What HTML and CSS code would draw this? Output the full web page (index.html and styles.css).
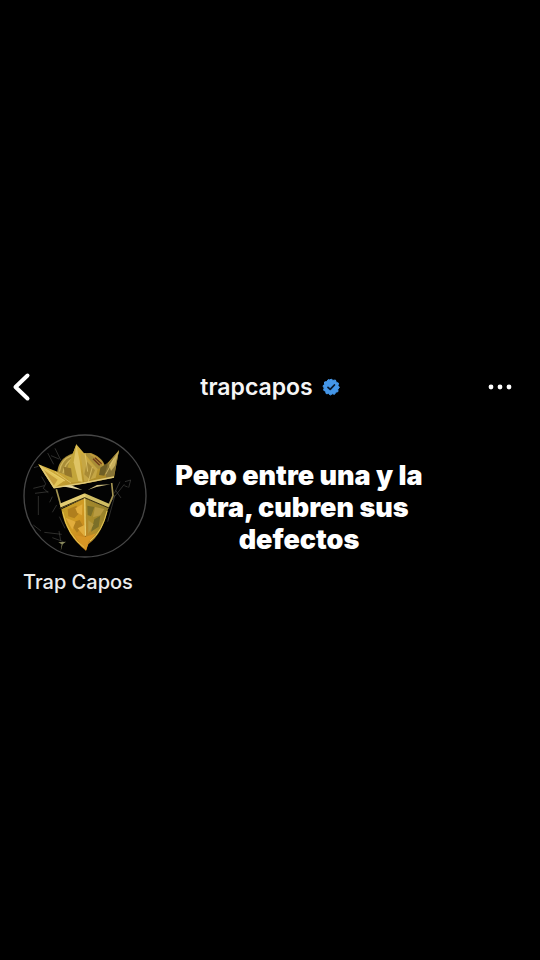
FILE: index.html
```
<!DOCTYPE html>
<html lang="es">
<head>
    <meta charset="UTF-8">
    <meta name="viewport" content="width=device-width, initial-scale=1.0">
    <title>trapcapos</title>
    <link rel="stylesheet" href="styles.css">
</head>
<body>
    <header class="topbar">
        <button class="icon-btn back" type="button" aria-label="Atrás">
            <svg width="20" height="30" viewBox="0 0 20 30" fill="none" stroke="#fff" stroke-width="4" stroke-linecap="round" stroke-linejoin="round">
                <path d="M15.5 3.5 L3.5 15 L15.5 26.5"/>
            </svg>
        </button>
        <h1 class="username">
            trapcapos
            <svg class="verified" width="18" height="18" viewBox="0 0 18 18" role="img" aria-label="Verificado">
                <path fill="#4496e8" stroke="#4496e8" stroke-linejoin="round" d="M9 1 L11 2.4 L13.4 2 L14.2 4.2 L16.5 5.2 L16 7.5 L17.4 9.4 L15.8 11.2 L16 13.6 L13.8 14.2 L12.6 16.3 L10.3 15.8 L8.3 17 L6.6 15.6 L4.2 15.7 L3.6 13.4 L1.6 12.2 L2.2 10 L0.9 8 L2.5 6.3 L2.5 4 L4.8 3.5 L6.2 1.6 L8 2.1 Z"/>
                <path fill="none" stroke="#08182c" stroke-width="1.8" stroke-linecap="round" stroke-linejoin="round" d="M6 9.4 L8.2 11.4 L12.4 7"/>
            </svg>
        </h1>
        <button class="icon-btn more" type="button" aria-label="Más opciones">
            <svg width="24" height="6" viewBox="0 0 24 6" fill="#fff">
                <circle cx="3" cy="3" r="2.4"/>
                <circle cx="12" cy="3" r="2.4"/>
                <circle cx="21" cy="3" r="2.4"/>
            </svg>
        </button>
    </header>

    <main class="profile">
        <div class="identity">
            <svg class="avatar" viewBox="24 27 372 372" role="img" aria-label="Trap Capos">
                <defs>
                    <linearGradient id="gold" x1="0" y1="0" x2="1" y2="1">
                        <stop offset="0" stop-color="#e6c850"/>
                        <stop offset=".5" stop-color="#c9a436"/>
                        <stop offset="1" stop-color="#95761c"/>
                    </linearGradient>
                    <linearGradient id="maskLeft" x1="0" y1="0" x2="1" y2="1">
                        <stop offset="0" stop-color="#b99a28"/>
                        <stop offset=".5" stop-color="#d19b24"/>
                        <stop offset="1" stop-color="#c47d18"/>
                    </linearGradient>
                    <linearGradient id="maskRight" x1="1" y1="0" x2="0" y2="1">
                        <stop offset="0" stop-color="#8d7b2c"/>
                        <stop offset=".6" stop-color="#ab8d2a"/>
                        <stop offset="1" stop-color="#cd8420"/>
                    </linearGradient>
                </defs>
                <circle cx="210" cy="213" r="183" fill="#020202" stroke="#474747" stroke-width="4"/>

                <!-- cracks -->
                <g fill="none" stroke="#5c5c58" stroke-width="2" opacity=".75">
                    <path d="M120 70 L137 105 M108 92 L132 102 M98 84 L116 118 M57 128 L70 124"/>
                    <path d="M80 155 L92 176 L85 190 L100 203 M55 190 L88 182 M60 205 L100 200 M88 148 L108 160"/>
                    <path d="M70 213 L70 270 M112 215 L104 232 M125 240 L112 262"/>
                    <path d="M133 275 L150 310 M88 322 L140 328 M132 318 L137 348 M112 338 L145 350 M55 300 L78 318"/>
                    <path d="M315 170 L298 205 M328 178 L272 248 M302 196 L318 219 M300 210 L278 290 M292 222 L268 270"/>
                    <path d="M330 170 L347 165 L341 188 M328 182 L338 186"/>
                </g>
                <path d="M130 352 L153 350 L143 358 L137 378 L140 358 Z" fill="#8a8a5e"/>

                <!-- helmet and crown -->
                <path d="M126 148 Q128 100 174 85 L228 84 Q270 100 272 135 L250 162 L140 168 Z" fill="#a88d38"/>
                <path d="M133 140 Q138 104 170 92 M144 145 Q148 116 174 99" fill="none" stroke="#d1b65a" stroke-width="4"/>
                <path d="M226 88 Q262 102 268 132" fill="none" stroke="#c39b3c" stroke-width="5"/>
                <path d="M234 101 L254 121 M240 98 L260 116" stroke="#713a18" stroke-width="4"/>
                <path d="M70 118 L150 149 L184 58 L248 132 L264 130 L312 76 L297 158 L208 176 L116 190 Z" fill="url(#gold)"/>
                <path d="M184 58 L192 110 L204 170 L166 172 L150 149 Z" fill="#c3a53a"/>
                <path d="M184 58 L176 112 L190 168 L202 170 L194 108 Z" fill="#dfc465"/>
                <path d="M196 82 L248 132 L242 158 L208 170 Z" fill="#c5a645"/>
                <path d="M216 110 L240 136 L226 164 L208 148 Z" fill="#a98b35"/>
                <path d="M146 125 L168 130 L172 158 L150 150 Z" fill="#96782a"/>
                <path d="M312 76 L268 132 L274 158 L297 154 Z" fill="#877436"/>
                <path d="M312 76 L282 120 L288 138 L300 122 Z" fill="#c9b05c"/>
                <path d="M256 128 L280 112 L268 152 L252 150 Z" fill="#6e5e25"/>
                <path d="M70 118 L150 166 L116 190 Z" fill="#e3c558"/>
                <path d="M82 132 L128 164 L116 182 Z" fill="#c7a03c"/>
                <path d="M76 122 L118 188 L206 174 L297 156" fill="none" stroke="#dfc978" stroke-width="4"/>
                <path d="M92 132 L150 168 M120 140 L168 174 M210 84 L218 140 M232 126 L220 170 M298 100 L272 148" fill="none" stroke="#e9cf76" stroke-width="2"/>

                <!-- face -->
                <path d="M122 192 L208 178 L298 161 L294 214 L280 240 L208 206 L136 242 Z" fill="#030303"/>
                <path d="M124 193 L140 250 M290 174 L294 212 L278 250" fill="none" stroke="#a39351" stroke-width="5"/>
                <path d="M142 184 L168 181 L202 195 L184 192 Z" fill="#e4d69d"/>
                <path d="M218 195 L246 180 L286 178 L244 186 Z" fill="#cdbd7e"/>

                <!-- mask -->
                <path d="M134 236 L209 205 L209 220 L138 250 Z" fill="#e3cc72"/>
                <path d="M209 205 L284 237 L279 250 L209 220 Z" fill="#d0bd63"/>
                <path d="M139 253 L209 220 L213 377 Q153 332 139 253 Z" fill="url(#maskLeft)"/>
                <path d="M209 220 L280 249 Q264 325 220 358 L213 377 Z" fill="url(#maskRight)"/>
                <path d="M158 253 L184 242 L196 262 L178 280 L160 274 Z M166 294 L194 285 L204 302 L186 323 Z" fill="#b07f1d"/>
                <path d="M181 250 L202 238 L201 271 L187 264 Z M152 278 L182 290 L172 314 Z M188 310 L208 300 L208 334 Z" fill="#e2ad3c"/>
                <path d="M217 242 L238 246 L228 274 L218 270 Z M238 283 L256 272 L251 305 L228 320 Z" fill="#7b6f28"/>
                <path d="M240 246 L268 252 L256 271 L234 277 Z M220 286 L236 298 L220 326 Z" fill="#b79a40"/>
                <path d="M180 331 L210 336 L244 325 L220 352 L213 377 Q190 350 180 331 Z" fill="#d79524"/>
                <path d="M209 208 L211 332" stroke="#efd674" stroke-width="4"/>
                <path d="M134 250 L209 218 L282 249" fill="none" stroke="#352b0c" stroke-width="3"/>
                <path d="M143 260 Q158 332 208 368 M276 258 Q262 320 225 348" fill="none" stroke="#e4c554" stroke-width="3"/>
            </svg>
            <h2 class="name">Trap Capos</h2>
        </div>
        <p class="caption">Pero entre una y la otra, cubren sus defectos</p>
    </main>
</body>
</html>
```
FILE: styles.css
```
* {
    box-sizing: border-box;
}

body {
    margin: 0;
    min-height: 100vh;
    display: flex;
    flex-direction: column;
    justify-content: center;
    background: #000;
    color: #fff;
    font-family: Inter, "Liberation Sans", sans-serif;
}

.topbar {
    display: grid;
    grid-template-columns: 1fr auto 1fr;
    align-items: center;
    height: 44px;
    padding: 0 28px 0 12px;
}

.icon-btn {
    display: flex;
    align-items: center;
    height: 44px;
    padding: 0;
    border: 0;
    background: none;
    cursor: pointer;
}

.more {
    justify-self: end;
}

.username {
    display: flex;
    align-items: center;
    gap: 9px;
    margin: 0 0 0 16px;
    font-size: 23px;
    line-height: 28px;
    font-weight: 600;
    color: #f5f5f5;
}

.profile {
    display: flex;
    align-items: flex-start;
    gap: 24px;
    padding: 25px 23px 2px;
}

.identity {
    flex: none;
}

.avatar {
    display: block;
    width: 124px;
    height: 124px;
}

.name {
    margin: 12px 0 0;
    font-size: 20px;
    line-height: 24px;
    font-weight: 500;
    color: #ececec;
}

.caption {
    max-width: 256px;
    margin: 0;
    padding-top: 26px;
    font-size: 27px;
    line-height: 32px;
    font-weight: 900;
    text-align: center;
}
```
